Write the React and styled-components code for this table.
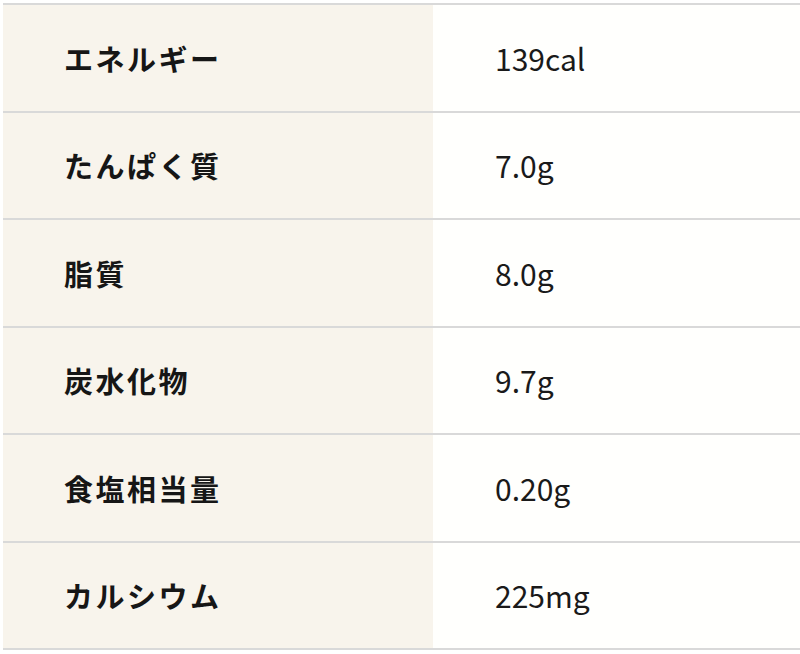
import React from 'react';
import styled, { createGlobalStyle } from 'styled-components';

const GlobalStyle = createGlobalStyle`
  html, body {
    margin: 0;
    padding: 0;
    background: #ffffff;
  }
  body {
    font-family: "Noto Sans CJK JP", "Noto Sans", sans-serif;
    color: #1b1b1b;
  }
`;

const nutrients = [
  { label: 'エネルギー', value: '139cal' },
  { label: 'たんぱく質', value: '7.0g' },
  { label: '脂質', value: '8.0g' },
  { label: '炭水化物', value: '9.7g' },
  { label: '食塩相当量', value: '0.20g' },
  { label: 'カルシウム', value: '225mg' },
];

const Page = styled.div`
  padding: 3px 0 0 3px;
  width: 800px;
  height: 654px;
  box-sizing: border-box;
  overflow: hidden;
`;

const Table = styled.div`
  display: flex;
  flex-direction: column;
  border-top: 2px solid #d9d9d9;
`;

const Row = styled.div`
  display: grid;
  grid-template-columns: 430px 1fr;
  height: 105.5px;
  border-bottom: 2px solid #d9d9d9;
`;

const Label = styled.div`
  display: flex;
  align-items: center;
  padding-left: 61px;
  background: #f8f4ec;
  font-size: 29px;
  font-weight: 700;
  letter-spacing: 2.5px;
  color: #161616;
`;

const Value = styled.div`
  display: flex;
  align-items: center;
  padding-left: 62px;
  background: #fffffd;
  font-size: 30px;
  font-weight: 400;
  color: #1a1a1a;
`;

export default function App() {
  return (
    <Page>
      <GlobalStyle />
      <Table>
        {nutrients.map((n) => (
          <Row key={n.label}>
            <Label>{n.label}</Label>
            <Value>{n.value}</Value>
          </Row>
        ))}
      </Table>
    </Page>
  );
}
